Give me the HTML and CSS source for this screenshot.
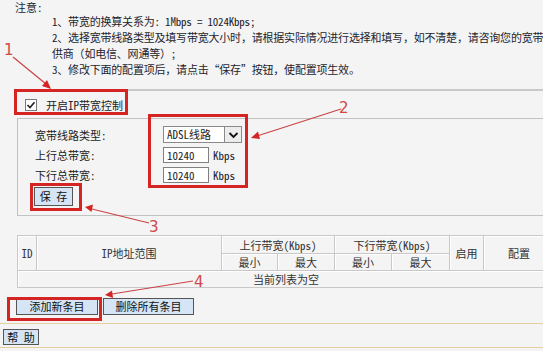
FILE: index.html
```html
<!DOCTYPE html>
<html lang="zh-CN">
<head>
  <meta charset="UTF-8">
  <title>IP带宽控制</title>
  <meta name="viewport" content="width=device-width, initial-scale=1.0">
  <link rel="stylesheet" href="styles.css">
</head>
<body>
  <div class="page">
    <div class="notes">
      <div class="notes-title">注意:</div>
      <div class="notes-list">
        <div class="note">1、带宽的换算关系为: 1Mbps = 1024Kbps;</div>
        <div class="note">2、选择宽带线路类型及填写带宽大小时，请根据实际情况进行选择和填写，如不清楚，请咨询您的宽带</div>
        <div class="note">供商（如电信、网通等）;</div>
        <div class="note">3、修改下面的配置项后，请点击“保存”按钮，使配置项生效。</div>
      </div>
    </div>

    <div class="enable-row">
      <span class="checkbox">
        <svg width="12" height="12" viewBox="0 0 12 12"><path d="M2.5 6 L5 8.6 L9.5 3.2" fill="none" stroke="#222" stroke-width="1.6"/></svg>
      </span>
      <span>开启IP带宽控制</span>
    </div>

    <div class="settings">
      <div class="form-row">
        <span class="label">宽带线路类型:</span>
        <div class="select">
          <span class="select-text">ADSL线路</span>
          <span class="select-arrow">
            <svg width="11" height="8" viewBox="0 0 11 8"><path d="M1.5 2 L5.5 6 L9.5 2" fill="none" stroke="#111" stroke-width="1.8"/></svg>
          </span>
        </div>
      </div>
      <div class="form-row">
        <span class="label">上行总带宽:</span>
        <span class="input">10240</span>
        <span class="unit">Kbps</span>
      </div>
      <div class="form-row">
        <span class="label">下行总带宽:</span>
        <span class="input">10240</span>
        <span class="unit">Kbps</span>
      </div>
      <div class="form-row">
        <button class="btn btn-save">保 存</button>
      </div>
    </div>

    <table class="rules">
      <colgroup>
        <col style="width:19px"><col style="width:185px"><col style="width:56px"><col style="width:57px">
        <col style="width:57px"><col style="width:58px"><col style="width:34px"><col style="width:71px">
      </colgroup>
      <tr class="head-1">
        <th rowspan="2">ID</th>
        <th rowspan="2">IP地址范围</th>
        <th colspan="2">上行带宽(Kbps)</th>
        <th colspan="2">下行带宽(Kbps)</th>
        <th rowspan="2">启用</th>
        <th rowspan="2">配置</th>
      </tr>
      <tr class="head-2">
        <th>最小</th><th>最大</th><th>最小</th><th>最大</th>
      </tr>
      <tr class="empty">
        <td colspan="8">当前列表为空</td>
      </tr>
    </table>

    <div class="actions">
      <button class="btn btn-add">添加新条目</button>
      <button class="btn btn-del">删除所有条目</button>
    </div>

    <div class="help-bar">
      <button class="btn btn-help">帮 助</button>
    </div>

    <!-- red annotations drawn over the page -->
    <svg class="annotations" width="543" height="351" viewBox="0 0 543 351">
      <g fill="none" stroke="#d42424" stroke-width="3">
        <rect x="15.5" y="90.5" width="111" height="23"/>
        <rect x="149.5" y="115.5" width="97" height="71"/>
        <rect x="31.5" y="184.5" width="49" height="25"/>
        <rect x="8.5" y="298.5" width="92" height="21"/>
      </g>
      <g stroke="#c94444" stroke-width="1.2">
        <line x1="13" y1="57" x2="46" y2="84"/>
        <line x1="341" y1="109" x2="257" y2="136"/>
        <line x1="149" y1="223" x2="92" y2="209"/>
        <line x1="193" y1="281" x2="112" y2="294"/>
      </g>
      <g fill="#d42424">
        <polygon points="51,89 42,86 47,80"/>
        <polygon points="251,138 258,131.5 260,139"/>
        <polygon points="85,207 93,204.5 91.5,212"/>
        <polygon points="105,295 112,290.5 113,298"/>
      </g>
      <g class="marks">
        <text x="4" y="55">1</text>
        <text x="339" y="113">2</text>
        <text x="149" y="232">3</text>
        <text x="194" y="287">4</text>
      </g>
    </svg>
  </div>
</body>
</html>
```

FILE: styles.css
```css
html, body {
  margin: 0;
  background: #f4f4f4;
}

body {
  width: 543px;
  height: 351px;
  overflow: hidden;
  color: #222;
  font-family: "Noto Sans Mono CJK SC", "Noto Sans CJK SC", sans-serif;
  font-size: 11px;
}

.page {
  position: relative;
  width: 543px;
  height: 351px;
}

.notes {
  color: #1e1e2e;
}

.notes-title {
  padding: 1px 0 0 15px;
  line-height: 12px;
}

.notes-list {
  padding-left: 52px;
  letter-spacing: -0.2px;
}

.note {
  line-height: 16px;
  white-space: nowrap;
}

.enable-row {
  display: flex;
  align-items: center;
  gap: 9px;
  height: 27px;
  margin: 12px 0 0 14px;
  padding-left: 11px;
  border-top: 2px solid #c9c9c9;
}

.checkbox {
  display: block;
  width: 12px;
  height: 12px;
  box-sizing: border-box;
  border: 1px solid #7a7a7a;
  background: #fff;
}

.checkbox svg {
  display: block;
  margin: -1px;
}

.settings {
  display: flex;
  flex-direction: column;
  gap: 4px;
  margin-left: 17px;
  padding: 7px 0 9px 17px;
  border: 1px solid #c2c2c2;
  border-right: none;
}

.form-row {
  display: flex;
  align-items: center;
}

.label {
  width: 128px;
  flex-shrink: 0;
}

.select {
  display: flex;
  width: 79px;
  height: 17px;
  box-sizing: border-box;
  border: 1px solid #8a8a8a;
  background: #fff;
}

.select-text {
  flex: 1;
  padding-left: 3px;
  line-height: 15px;
}

.select-arrow {
  display: flex;
  align-items: center;
  justify-content: center;
  width: 16px;
  border-left: 1px solid #8a8a8a;
  background: #ececec;
}

.input {
  width: 46px;
  height: 16px;
  box-sizing: border-box;
  padding-left: 3px;
  border: 1px solid #808080;
  background: #fff;
  line-height: 14px;
}

.unit {
  margin-left: 4px;
  color: #223;
}

.btn {
  box-sizing: border-box;
  height: 17px;
  padding: 0;
  border: 1px solid #555;
  background: #d5e5f5;
  color: #111;
  font-family: inherit;
  font-size: 11px;
  line-height: 15px;
}

.btn-save {
  width: 39px;
  height: 19px;
  margin-left: -1px;
}

.rules {
  width: 537px;
  margin: 19px 0 0 17px;
  border-collapse: collapse;
  table-layout: fixed;
  border: 1px solid #bcbcbc;
}

.rules th,
.rules td {
  padding: 0;
  border: 1px solid #c8c8c8;
  font-weight: normal;
  text-align: center;
  color: #333;
  box-shadow: inset 1px 1px 0 #fff;
}

.head-1 th {
  height: 17px;
}

.head-2 th {
  height: 16px;
}

.empty td {
  height: 16px;
}

.actions {
  display: flex;
  gap: 5px;
  margin: 10px 0 0 16px;
}

.btn-add {
  width: 82px;
}

.btn-del {
  width: 91px;
}

.help-bar {
  margin-top: 8px;
  padding: 5px 0 2px 3px;
  border-top: 1px solid #e2cf9c;
  border-bottom: 1px solid #e2cf9c;
}

.btn-help {
  display: block;
  width: 36px;
  height: 16px;
}

.annotations {
  position: absolute;
  left: 0;
  top: 0;
  pointer-events: none;
}

.marks text {
  fill: #cc4a48;
  font-family: "DejaVu Sans", sans-serif;
  font-size: 15px;
}
```
